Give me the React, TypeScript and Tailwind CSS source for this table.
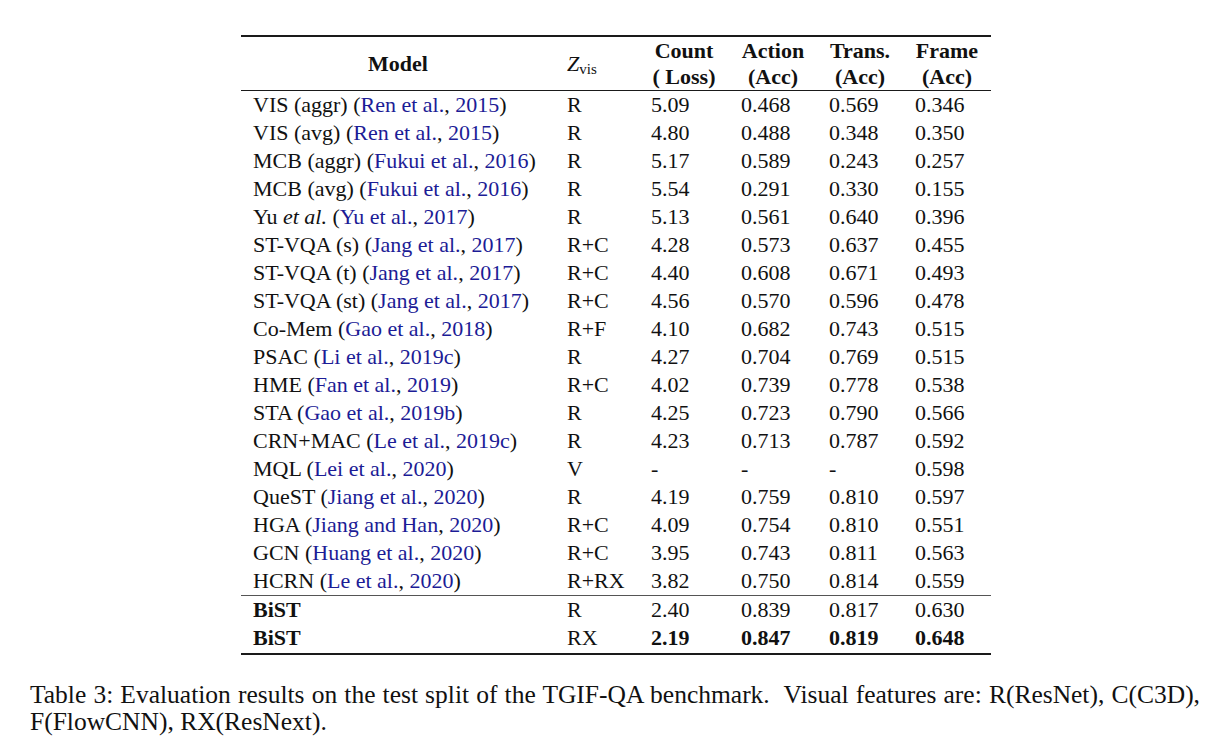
const cols = 'grid grid-cols-[314px_84px_90px_88px_86px_88px]';

type Row = {
  name: React.ReactNode;
  cite?: string;
  year?: string;
  z: string;
  v: string[];
  bold?: boolean;
  boldNums?: boolean;
};

const rows: Row[] = [
  { name: 'VIS (aggr)', cite: 'Ren et al.', year: '2015', z: 'R', v: ['5.09', '0.468', '0.569', '0.346'] },
  { name: 'VIS (avg)', cite: 'Ren et al.', year: '2015', z: 'R', v: ['4.80', '0.488', '0.348', '0.350'] },
  { name: 'MCB (aggr)', cite: 'Fukui et al.', year: '2016', z: 'R', v: ['5.17', '0.589', '0.243', '0.257'] },
  { name: 'MCB (avg)', cite: 'Fukui et al.', year: '2016', z: 'R', v: ['5.54', '0.291', '0.330', '0.155'] },
  {
    name: (
      <>
        Yu <i>et al.</i>
      </>
    ),
    cite: 'Yu et al.',
    year: '2017',
    z: 'R',
    v: ['5.13', '0.561', '0.640', '0.396'],
  },
  { name: 'ST-VQA (s)', cite: 'Jang et al.', year: '2017', z: 'R+C', v: ['4.28', '0.573', '0.637', '0.455'] },
  { name: 'ST-VQA (t)', cite: 'Jang et al.', year: '2017', z: 'R+C', v: ['4.40', '0.608', '0.671', '0.493'] },
  { name: 'ST-VQA (st)', cite: 'Jang et al.', year: '2017', z: 'R+C', v: ['4.56', '0.570', '0.596', '0.478'] },
  { name: 'Co-Mem', cite: 'Gao et al.', year: '2018', z: 'R+F', v: ['4.10', '0.682', '0.743', '0.515'] },
  { name: 'PSAC', cite: 'Li et al.', year: '2019c', z: 'R', v: ['4.27', '0.704', '0.769', '0.515'] },
  { name: 'HME', cite: 'Fan et al.', year: '2019', z: 'R+C', v: ['4.02', '0.739', '0.778', '0.538'] },
  { name: 'STA', cite: 'Gao et al.', year: '2019b', z: 'R', v: ['4.25', '0.723', '0.790', '0.566'] },
  { name: 'CRN+MAC', cite: 'Le et al.', year: '2019c', z: 'R', v: ['4.23', '0.713', '0.787', '0.592'] },
  { name: 'MQL', cite: 'Lei et al.', year: '2020', z: 'V', v: ['-', '-', '-', '0.598'] },
  { name: 'QueST', cite: 'Jiang et al.', year: '2020', z: 'R', v: ['4.19', '0.759', '0.810', '0.597'] },
  { name: 'HGA', cite: 'Jiang and Han', year: '2020', z: 'R+C', v: ['4.09', '0.754', '0.810', '0.551'] },
  { name: 'GCN', cite: 'Huang et al.', year: '2020', z: 'R+C', v: ['3.95', '0.743', '0.811', '0.563'] },
  { name: 'HCRN', cite: 'Le et al.', year: '2020', z: 'R+RX', v: ['3.82', '0.750', '0.814', '0.559'] },
];

const ours: Row[] = [
  { name: 'BiST', z: 'R', v: ['2.40', '0.839', '0.817', '0.630'], bold: true },
  { name: 'BiST', z: 'RX', v: ['2.19', '0.847', '0.819', '0.648'], bold: true, boldNums: true },
];

function TableRow({ r }: { r: Row }) {
  return (
    <div className={`${cols} h-[28px] leading-[28px]`}>
      <div className="px-3 whitespace-nowrap">
        {r.bold ? <b>{r.name}</b> : r.name}
        {r.cite && (
          <>
            {' '}(<span className="text-[#1c1c96]">{r.cite}</span>,{' '}
            <span className="text-[#1c1c96]">{r.year}</span>)
          </>
        )}
      </div>
      <div className="px-3">{r.z}</div>
      {r.v.map((x, i) => (
        <div key={i} className={`px-3 ${r.boldNums ? 'font-bold' : ''}`}>
          {x}
        </div>
      ))}
    </div>
  );
}

export default function App() {
  return (
    <div className="w-[1224px] h-[750px] bg-white text-[#111] font-['Liberation_Serif',serif] text-[22px] pt-[35px]">
      <div className="w-[750px] ml-[241px] border-t-2 border-b-2 border-[#1a1a1a]">
        {/* Header */}
        <div className={`${cols} h-[54px] border-b border-[#1a1a1a] font-bold leading-[26px]`}>
          <div className="px-3 flex items-center justify-center">Model</div>
          <div className="px-3 flex items-center font-normal">
            <span>
              <i>Z</i>
              <sub className="text-[15px] not-italic">vis</sub>
            </span>
          </div>
          <div className="px-3 flex flex-col items-center justify-center">
            <span>Count</span>
            <span>( Loss)</span>
          </div>
          <div className="px-3 flex flex-col items-center justify-center">
            <span>Action</span>
            <span>(Acc)</span>
          </div>
          <div className="px-3 flex flex-col items-center justify-center">
            <span>Trans.</span>
            <span>(Acc)</span>
          </div>
          <div className="px-3 flex flex-col items-center justify-center">
            <span>Frame</span>
            <span>(Acc)</span>
          </div>
        </div>

        {rows.map((r, i) => (
          <TableRow key={i} r={r} />
        ))}

        <div className="border-t border-[#555] pb-[1px]">
          {ours.map((r, i) => (
            <TableRow key={i} r={r} />
          ))}
        </div>
      </div>

      {/* Caption */}
      <div className="pl-[30px] pt-[26px] leading-[27px] text-[25.5px] whitespace-nowrap">
        <div className="w-[1170px] text-justify [text-align-last:justify]">
          Table 3: Evaluation results on the test split of the TGIF-QA benchmark.&nbsp; Visual features are: R(ResNet), C(C3D),
        </div>
        <div>F(FlowCNN), RX(ResNext).</div>
      </div>
    </div>
  );
}
